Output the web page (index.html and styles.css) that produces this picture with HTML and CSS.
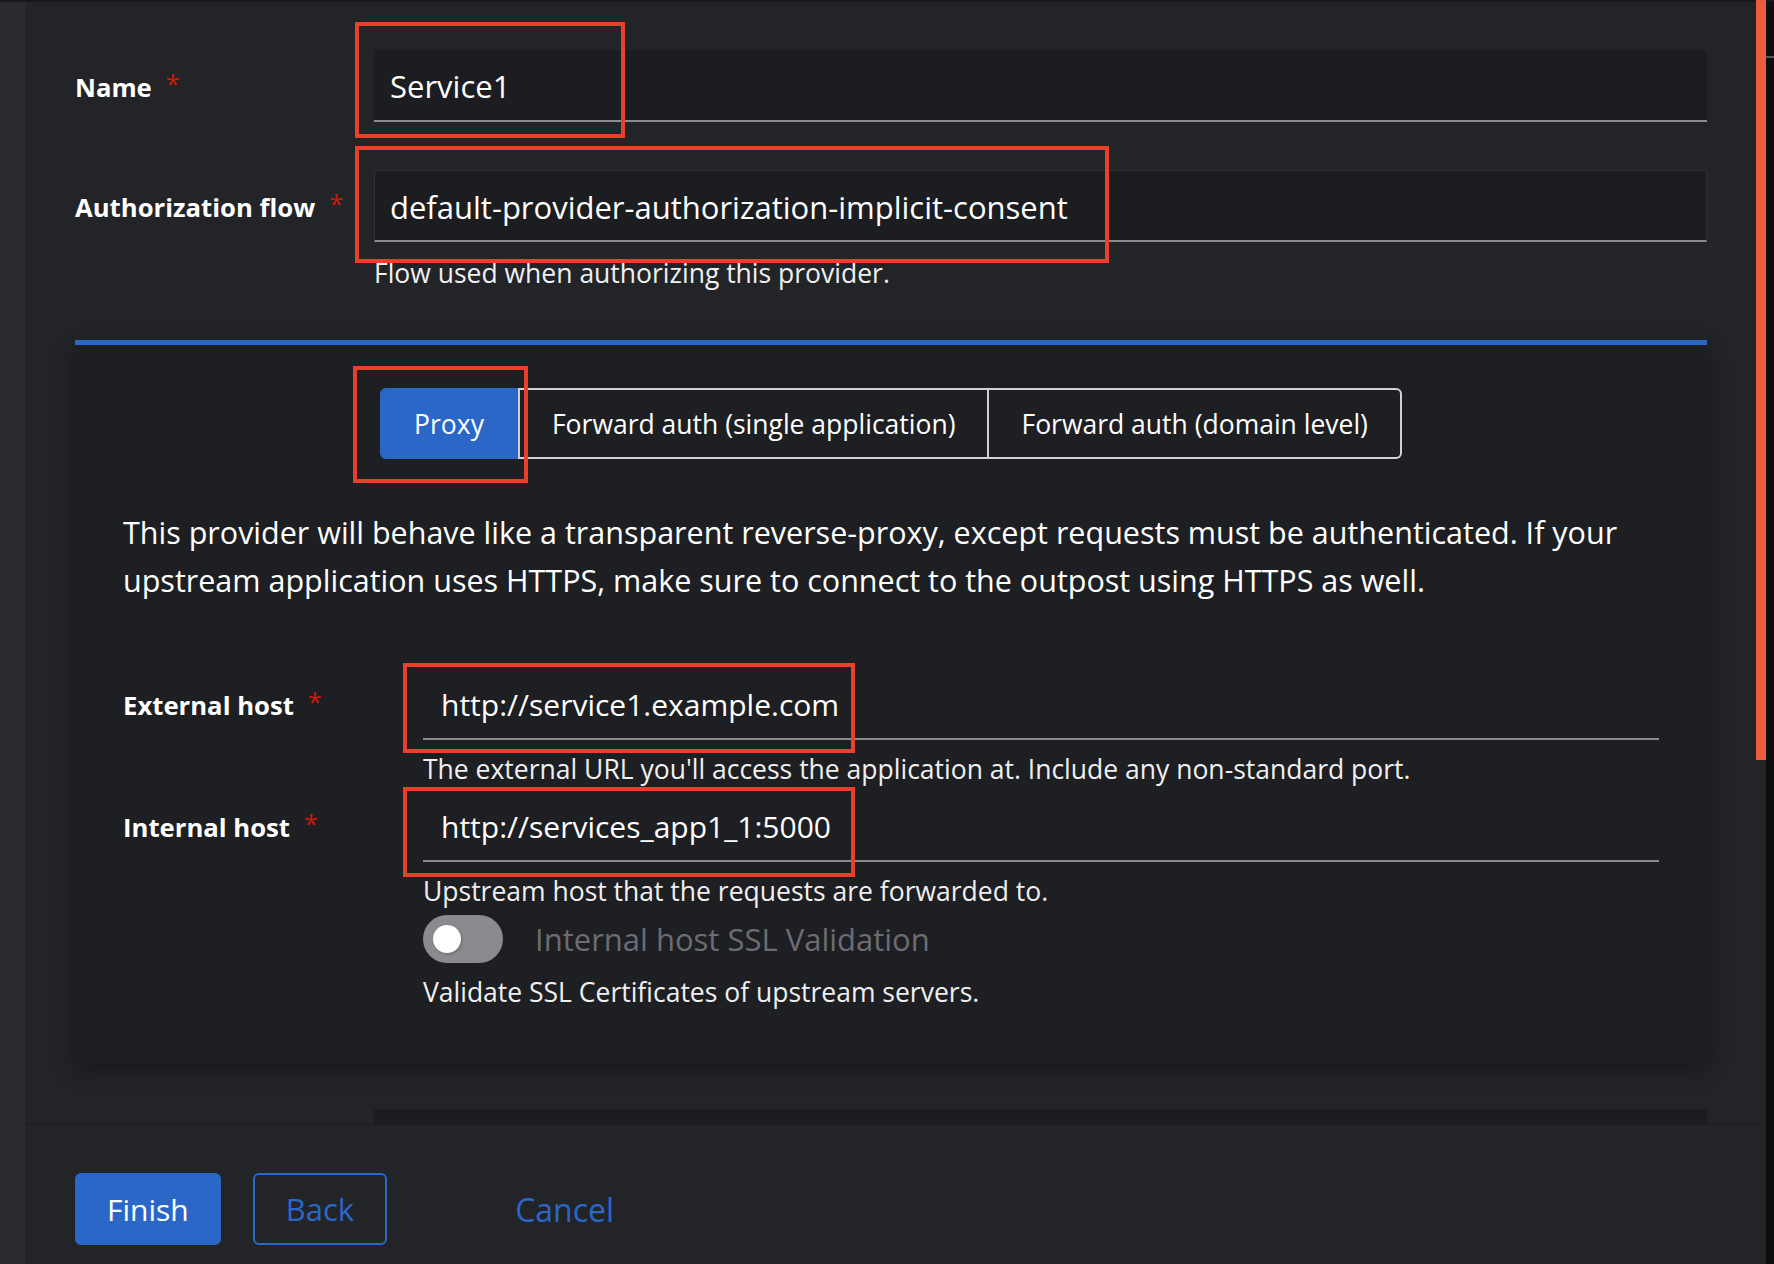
FILE: index.html
```html
<!DOCTYPE html>
<html lang="en">
<head>
<meta charset="utf-8">
<title>Proxy provider</title>
<link rel="stylesheet" href="styles.css">
</head>
<body>
<div class="topline"></div>
<div class="app">
  <div class="rail"></div>
  <div class="main">
    <div class="scroll">
      <form class="form">
        <div class="row">
          <div class="label">Name<span class="req">*</span></div>
          <div class="field">
            <div class="input filled">Service1<span class="mark mark-name"></span></div>
          </div>
        </div>
        <div class="row">
          <div class="label">Authorization flow<span class="req">*</span></div>
          <div class="field">
            <div class="input filled bordered">default-provider-authorization-implicit-consent<span class="mark mark-auth"></span></div>
            <div class="helper">Flow used when authorizing this provider.</div>
          </div>
        </div>

        <section class="card">
          <div class="toggle">
            <div class="tbtn active">Proxy<span class="mark mark-proxy"></span></div>
            <div class="tbtn">Forward auth (single application)</div>
            <div class="tbtn last">Forward auth (domain level)</div>
          </div>
          <p class="desc">This provider will behave like a transparent reverse-proxy, except requests must be authenticated. If your<br>upstream application uses HTTPS, make sure to connect to the outpost using HTTPS as well.</p>
          <div class="row inner">
            <div class="label">External host<span class="req">*</span></div>
            <div class="field">
              <div class="input plain">http://service1.example.com<span class="mark mark-ext"></span></div>
              <div class="helper helper-inner">The external URL you'll access the application at. Include any non-standard port.</div>
            </div>
          </div>
          <div class="row inner">
            <div class="label">Internal host<span class="req">*</span></div>
            <div class="field">
              <div class="input plain">http://services_app1_1:5000<span class="mark mark-int"></span></div>
              <div class="helper helper-inner">Upstream host that the requests are forwarded to.</div>
              <div class="switchrow">
                <span class="switch"></span>
                <span class="switch-label">Internal host SSL Validation</span>
              </div>
              <div class="helper helper-inner">Validate SSL Certificates of upstream servers.</div>
            </div>
          </div>
        </section>

        <div class="row after">
          <div></div>
          <div class="field">
            <div class="input filled"></div>
          </div>
        </div>
      </form>
    </div>
    <footer class="footer">
      <button class="btn primary" type="button">Finish</button>
      <button class="btn secondary" type="button">Back</button>
      <button class="btn link" type="button">Cancel</button>
    </footer>
  </div>
  <div class="gutter"><span class="gutter-dash"></span></div>
</div>
<div class="thumb"></div>
</body>
</html>
```

FILE: styles.css
```css
* {
  box-sizing: border-box;
  margin: 0;
  padding: 0;
}

html,
body {
  width: 1774px;
  height: 1264px;
}

body {
  background: #232428;
  color: #ffffff;
  font-family: "Open Sans", "Noto Sans", sans-serif;
  overflow: hidden;
  position: relative;
}

.topline {
  height: 2px;
  background: #17181a;
}

.app {
  display: flex;
  height: 1262px;
}

.rail {
  flex: none;
  width: 25px;
  background: #2b2c30;
}

.main {
  flex: 1;
  min-width: 0;
  display: flex;
  flex-direction: column;
  background: #232428;
}

.gutter {
  flex: none;
  width: 8px;
  background: #0e0e0f;
  position: relative;
}

.gutter-dash {
  position: absolute;
  left: 0;
  top: 54px;
  width: 8px;
  height: 2px;
  background: #55575b;
}

.scroll {
  flex: 1;
  overflow: hidden;
  padding: 48px 59px 0 50px;
}

.form {
  display: flex;
  flex-direction: column;
  gap: 48px;
}

.row {
  display: grid;
  grid-template-columns: 299px 1fr;
}

.row.inner {
  grid-template-columns: 300px 1fr;
}

.row.after {
  margin-top: -2px;
}

.label {
  height: 72px;
  padding-top: 3px;
  display: flex;
  align-items: center;
  font-size: 25.7px;
  font-weight: 700;
  color: #ffffff;
}

.req {
  color: #c9190b;
  margin-left: 14px;
  font-weight: 400;
  position: relative;
  top: -4px;
}

.field {
  min-width: 0;
}

.input {
  position: relative;
  height: 72px;
  display: flex;
  align-items: center;
  padding: 2px 16px 0;
  font-size: 31px;
  color: #ffffff;
  border-bottom: 2px solid #8a8b8f;
  white-space: nowrap;
}

.input.filled {
  background: #1c1d20;
}

.input.bordered {
  border: 1px solid #2f3034;
  border-bottom: 2px solid #8a8b8f;
  padding-left: 15px;
}

.input.plain {
  background: transparent;
  padding-left: 18px;
  font-size: 30px;
}

.helper {
  margin-top: 10px;
  font-size: 26.5px;
  line-height: 42px;
  color: #f0f0f0;
}

.helper-inner {
  margin-top: 8px;
}

.card {
  margin-top: -2px;
  background: #1e1f23;
  border-top: 5px solid #2a67c7;
  padding: 43px 48px 50px;
  box-shadow: 0 8px 22px rgba(0, 0, 0, 0.32);
}

.toggle {
  display: flex;
  justify-content: center;
  margin-bottom: 49px;
}

.tbtn {
  position: relative;
  height: 71px;
  display: flex;
  align-items: center;
  padding: 0 32px;
  font-size: 26.5px;
  color: #ffffff;
  border: 2px solid #d2d2d2;
  white-space: nowrap;
}

.tbtn.active {
  background: #2a67c7;
  border-color: #2a67c7;
  border-radius: 6px 0 0 6px;
}

.tbtn.last {
  border-left: none;
  border-radius: 0 6px 6px 0;
}

.desc {
  font-size: 30.5px;
  line-height: 48px;
  margin-bottom: 64px;
  color: #ffffff;
}

.switchrow {
  margin-top: 3px;
  display: flex;
  align-items: center;
  gap: 32px;
  height: 48px;
}

.switch {
  position: relative;
  flex: none;
  width: 80px;
  height: 48px;
  border-radius: 24px;
  background: #8a8b8f;
}

.switch::before {
  content: "";
  position: absolute;
  left: 10px;
  top: 10px;
  width: 28px;
  height: 28px;
  border-radius: 50%;
  background: #ffffff;
  box-shadow: 1px 1px 3px rgba(0, 0, 0, 0.25);
}

.switch-label {
  font-size: 31px;
  color: #6b6d72;
}

.footer {
  flex: none;
  height: 140px;
  border-top: 1px solid #1c1d20;
  padding: 48px 50px 0;
  display: flex;
  align-items: flex-start;
}

.btn {
  height: 72px;
  padding: 0 32px;
  font-family: "Open Sans", "Noto Sans", sans-serif;
  font-size: 30px;
  border-radius: 6px;
  border: none;
  background: none;
  display: flex;
  align-items: center;
  cursor: pointer;
}

.btn.primary {
  background: #2a67c7;
  color: #ffffff;
}

.btn.secondary {
  margin-left: 32px;
  border: 2px solid #2a67c7;
  color: #2a67c7;
  padding: 0 31px;
  font-size: 31px;
}

.btn.link {
  margin-left: 96px;
  color: #2a67c7;
  font-size: 32px;
}

.mark {
  position: absolute;
  border: 4px solid #e8402a;
  pointer-events: none;
  z-index: 5;
}

.mark-name {
  left: -19px;
  top: -28px;
  width: 270px;
  height: 116px;
}

.mark-auth {
  left: -20px;
  top: -25px;
  width: 754px;
  height: 117px;
}

.mark-proxy {
  left: -29px;
  top: -24px;
  width: 175px;
  height: 117px;
}

.mark-ext {
  left: -20px;
  top: -5px;
  width: 452px;
  height: 90px;
}

.mark-int {
  left: -20px;
  top: -3px;
  width: 452px;
  height: 90px;
}

.thumb {
  position: absolute;
  left: 1756px;
  top: 0;
  width: 10px;
  height: 760px;
  background: #ec5b3d;
}
```
